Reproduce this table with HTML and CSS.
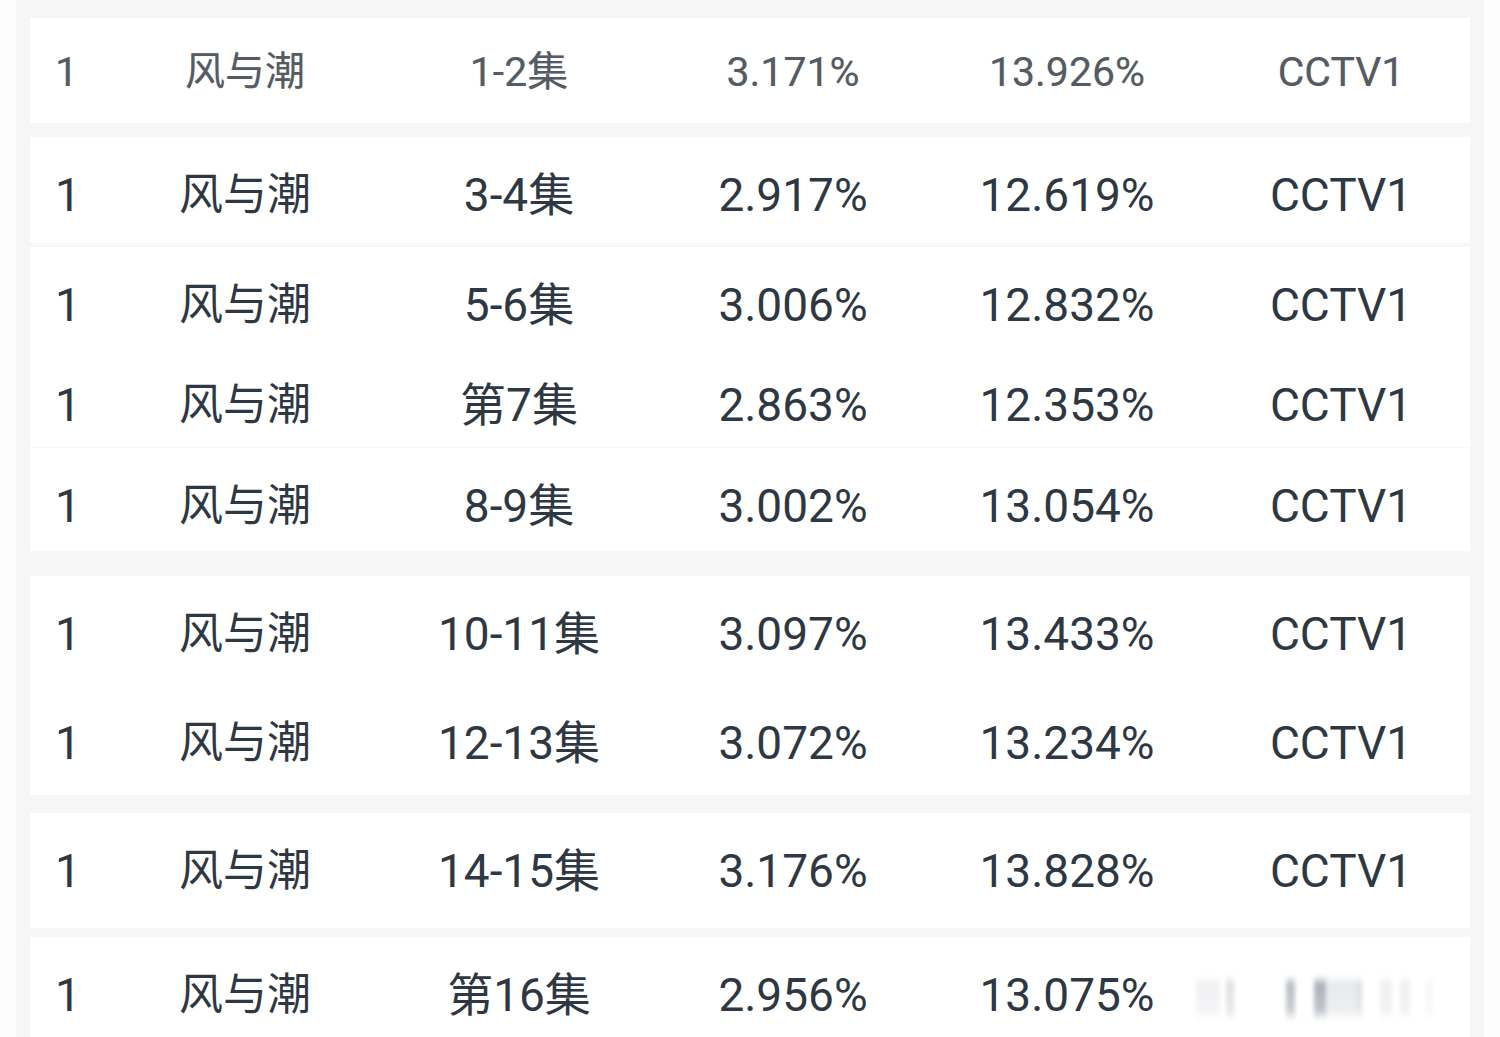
FILE: index.html
```html
<!DOCTYPE html>
<html lang="zh-CN">
<head>
<meta charset="utf-8">
<title>风与潮 收视</title>
<link rel="stylesheet" href="styles.css">
</head>
<body>
<div class="sheet">
  <section class="block">
    <div class="row h105 faded">
      <span class="c rank">1</span><span class="c cn">风与潮</span><span class="c">1-2集</span><span class="c">3.171%</span><span class="c">13.926%</span><span class="c ch">CCTV1</span>
    </div>
  </section>
  <section class="block g14">
    <div class="row h106">
      <span class="c rank">1</span><span class="c cn">风与潮</span><span class="c">3-4集</span><span class="c">2.917%</span><span class="c">12.619%</span><span class="c ch">CCTV1</span>
    </div>
  </section>
  <section class="block g4">
    <div class="row h100">
      <span class="c rank">1</span><span class="c cn">风与潮</span><span class="c">5-6集</span><span class="c">3.006%</span><span class="c">12.832%</span><span class="c ch">CCTV1</span>
    </div>
    <div class="row h100">
      <span class="c rank">1</span><span class="c cn">风与潮</span><span class="c">第7集</span><span class="c">2.863%</span><span class="c">12.353%</span><span class="c ch">CCTV1</span>
    </div>
  </section>
  <section class="block g1">
    <div class="row h103">
      <span class="c rank">1</span><span class="c cn">风与潮</span><span class="c">8-9集</span><span class="c">3.002%</span><span class="c">13.054%</span><span class="c ch">CCTV1</span>
    </div>
  </section>
  <section class="block g25">
    <div class="row h109">
      <span class="c rank">1</span><span class="c cn">风与潮</span><span class="c">10-11集</span><span class="c">3.097%</span><span class="c">13.433%</span><span class="c ch">CCTV1</span>
    </div>
    <div class="row h110">
      <span class="c rank">1</span><span class="c cn">风与潮</span><span class="c">12-13集</span><span class="c">3.072%</span><span class="c">13.234%</span><span class="c ch">CCTV1</span>
    </div>
  </section>
  <section class="block g18">
    <div class="row h115">
      <span class="c rank">1</span><span class="c cn">风与潮</span><span class="c">14-15集</span><span class="c">3.176%</span><span class="c">13.828%</span><span class="c ch">CCTV1</span>
    </div>
  </section>
  <section class="block g9">
    <div class="row h100">
      <span class="c rank">1</span><span class="c cn">风与潮</span><span class="c">第16集</span><span class="c">2.956%</span><span class="c">13.075%</span>
      <span class="c ch smear" aria-label="CCTV1">
        <i class="s s1"></i><i class="s s2"></i><i class="s s3"></i><i class="s s4"></i><i class="s s5"></i><i class="s s6"></i><i class="s s7"></i><i class="s s8"></i><i class="s s9"></i>
      </span>
    </div>
  </section>
</div>
</body>
</html>
```

FILE: styles.css
```css
html, body {
  margin: 0;
  padding: 0;
  background: #fdfdfd;
}

body {
  height: 1037px;
  overflow: hidden;
  font-family: Roboto, "Noto Sans CJK SC", sans-serif;
  color: #2d3843;
}

.sheet {
  margin-left: 16px;
  width: 1468px;
  height: 1037px;
  box-sizing: border-box;
  padding: 18px 14px 0;
  background: #f6f6f6;
}

.block {
  background: #ffffff;
  width: 1440px;
}

.g1 { margin-top: 1px; }
.g4 { margin-top: 4px; }
.g9 { margin-top: 9px; }
.g14 { margin-top: 14px; }
.g18 { margin-top: 18px; }
.g25 { margin-top: 25px; }

.row {
  display: grid;
  grid-template-columns: 78px repeat(4, 274px) 266px;
  align-items: start;
  box-sizing: border-box;
  padding-top: 30px;
  font-size: 46px;
  line-height: 56px;
}

.h100 { height: 100px; }
.h103 { height: 103px; }
.h105 { height: 105px; }
.h106 { height: 106px; }
.h109 { height: 109px; }
.h110 { height: 110px; }
.h115 { height: 115px; }

.c {
  text-align: center;
  white-space: nowrap;
}

.cn {
  font-size: 44px;
}

.rank {
  text-align: left;
  padding-left: 25px;
}

.ch {
  padding-left: 8px;
}

.faded {
  font-size: 41px;
  padding-top: 26px;
  color: #555b62;
  text-shadow: 0 0 1px rgba(85, 91, 98, 0.35);
}

.faded .cn {
  font-size: 40px;
}

.smear {
  position: relative;
  height: 56px;
}

.s {
  position: absolute;
  top: 8px;
  height: 46px;
  background: linear-gradient(to bottom, rgba(60, 72, 92, 0), rgba(60, 72, 92, 0.6) 22%, rgba(60, 72, 92, 0.45) 75%, rgba(60, 72, 92, 0));
  filter: blur(2px);
}

.s1 { left: -8px;  width: 24px; opacity: 0.12; }
.s2 { left: 22px;  width: 8px;  opacity: 0.28; }
.s3 { left: 82px;  width: 9px;  opacity: 0.6; }
.s4 { left: 110px; width: 12px; opacity: 0.7; }
.s5 { left: 122px; width: 30px; opacity: 0.2; }
.s6 { left: 152px; width: 6px;  opacity: 0.3; }
.s7 { left: 176px; width: 12px; opacity: 0.14; }
.s8 { left: 196px; width: 10px; opacity: 0.14; }
.s9 { left: 222px; width: 7px;  opacity: 0.07; }
```
